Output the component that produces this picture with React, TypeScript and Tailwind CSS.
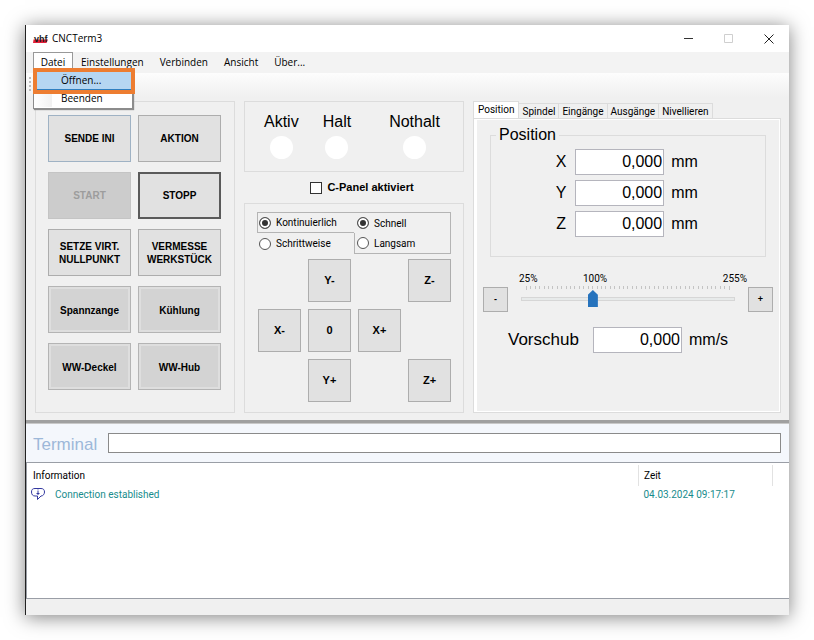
import React, { useState } from "react";
import clsx from "clsx";

const menus = ["Einstellungen", "Verbinden", "Ansicht", "Über..."];

const tabs = ["Position", "Spindel", "Eingänge", "Ausgänge", "Nivellieren"];

const commands = [
    { text: "SENDE INI", look: "focus" },
    { text: "AKTION", look: "normal" },
    { text: "START", look: "disabled" },
    { text: "STOPP", look: "strong" },
    { text: "SETZE VIRT. NULLPUNKT", look: "normal" },
    { text: "VERMESSE WERKSTÜCK", look: "normal" },
    { text: "Spannzange", look: "toggle" },
    { text: "Kühlung", look: "toggle" },
    { text: "WW-Deckel", look: "toggle" },
    { text: "WW-Hub", look: "toggle" },
];

const looks: Record<string, string> = {
    normal: "border border-[#adadad] bg-[#e1e1e1]",
    focus: "border border-[#9fb2c4] bg-[#e1e1e1]",
    disabled: "border border-[#c4c4c4] bg-[#cccccc] text-[#9d9d9d]",
    strong: "border-2 border-[#5a5a5a] bg-[#e1e1e1]",
    toggle: "border border-[#b4b4b4] bg-[#d3d3d3] pt-0.5 inset-ring-2 inset-ring-[#dedede]",
};

// null is an empty cell of the jog pad
const jogKeys = [
    null, "Y-", null, "Z-",
    "X-", "0", "X+", null,
    null, "Y+", null, "Z+",
];

const ticks = Array.from({ length: 47 }, (_, i) => i);

const VhfLogo = () => (
    <svg width="15" height="10" viewBox="0 0 15 10" aria-hidden="true">
        <path d="M.5 5.500h14.500L13.500 9H0z" fill="#e3203a" />
        <text
            x="1"
            y="8"
            fontSize="9"
            fontWeight="bold"
            fontFamily="'Liberation Sans', sans-serif"
            fill="#1a1a1a"
        >
            vhf
        </text>
    </svg>
);

const InfoBubble = () => (
    <svg width="14" height="12" viewBox="0 0 14 12" fill="none" stroke="#3338a0" aria-hidden="true">
        <path d="M4 .5h6c2.500 0 3.500 1.500 3.500 3.500S12.200 8 10 8L6.500 11.500V8H4C1.800 8 .5 6.500.5 4S1.700.5 4 .5z" />
        <path d="M7 1.500v1M7 3v4M5.500 5.500h3" />
    </svg>
);

const TitleBar = () => (
    <header className="flex h-[27px] items-center bg-white pl-[7px]">
        <VhfLogo />
        <h1 className="ml-1 flex-1 font-['Open_Sans',sans-serif] text-[10px]">CNCTerm3</h1>
        <button className="flex h-full w-[41px] items-center justify-center" aria-label="Minimieren">
            <svg width="10" height="10" stroke="#333"><path d="M0 4.500h9" /></svg>
        </button>
        <button className="flex h-full w-[39px] items-center justify-center" aria-label="Maximieren" disabled>
            <svg width="10" height="10" fill="none" stroke="#cfcfcf"><path d="M.5.5h8v8h-8z" /></svg>
        </button>
        <button className="flex h-full w-[41px] items-center justify-center" aria-label="Schließen">
            <svg width="10" height="10" stroke="#222"><path d="M.5.5l9 9M9.500.5l-9 9" /></svg>
        </button>
    </header>
);

const MenuBar = () => (
    <nav className="flex h-[21px] bg-[#f3f3f3] pl-[7px] font-['Open_Sans',sans-serif] text-[10px] leading-[18px]">
        <div className="relative">
            <button className="h-full w-10 border border-b-0 border-[#999] bg-white pb-[3px]">Datei</button>
            <div className="absolute top-4 left-0 z-10 h-[41px] w-[100px] border border-[#8c8c8c] bg-white shadow-[1px_1px_1px_#8c8c8c]">
                <div className="-mt-px -ml-px w-[102px] border-4 border-[#ed7d31]">
                    <button className="block h-[18px] w-full border-b border-[#2f7fc0] bg-[#b5d6f2] pb-0.5 pl-6 text-left leading-[14px]">
                        Öffnen...
                    </button>
                </div>
                <div className="flex">
                    <div className="h-[13px] w-[18px] bg-linear-to-r from-white to-[#f1f1f1]" />
                    <button className="ml-[9px] h-[13px] pb-1 leading-[9px]">Beenden</button>
                </div>
            </div>
        </div>
        {menus.map((menu) => (
            <button key={menu} className="px-2 pb-0.5">{menu}</button>
        ))}
    </nav>
);

const CommandPanel = () => (
    <section className="grid w-[200px] shrink-0 grid-cols-2 content-start gap-x-[7px] gap-y-[10px] border border-[#dcdcdc] pt-[13px] pr-[13px] pb-[22px] pl-3">
        {commands.map((command) => (
            <button
                key={command.text}
                disabled={command.look === "disabled"}
                className={clsx("h-[47px] px-1 text-[10px] leading-[13px] font-bold", looks[command.look])}
            >
                {command.text}
            </button>
        ))}
    </section>
);

const Lamp: React.FC<{ text: string; className?: string }> = ({ text, className }) => (
    <div className={clsx("flex flex-col items-center gap-1", className)}>
        <span className="text-[16px] leading-5">{text}</span>
        <span className="size-[23px] rounded-full bg-white" />
    </div>
);

const Radio: React.FC<{ name: string; text: string; checked?: boolean; className?: string }> = ({
    name,
    text,
    checked,
    className,
}) => (
    <label className={clsx("flex h-[21px] items-center gap-[5px] font-['Roboto',sans-serif]", className)}>
        <input
            type="radio"
            name={name}
            defaultChecked={checked}
            className="size-3 appearance-none rounded-full border border-[#555] bg-white checked:bg-[#333] checked:inset-ring-2 checked:inset-ring-white"
        />
        {text}
    </label>
);

const JogPanel = () => (
    <div className="flex w-[220px] shrink-0 flex-col">
        <section className="flex h-[71px] border border-[#dcdcdc] pt-[10px] pl-[19px]">
            <Lamp text="Aktiv" />
            <Lamp text="Halt" className="ml-6" />
            <Lamp text="Nothalt" className="ml-[38px]" />
        </section>
        <label className="flex h-[31px] items-center justify-center gap-[5px] pl-4 text-[11px] font-bold">
            <input type="checkbox" className="size-3 appearance-none border border-[#333] bg-white" />
            C-Panel aktiviert
        </label>
        <section className="flex-1 border border-[#dcdcdc] px-3 pt-2">
            <div className="grid grid-cols-2 text-[10px]">
                <Radio name="mode" text="Kontinuierlich" checked className="border border-r-0 border-[#b4b4b4] pl-px" />
                <Radio name="speed" text="Schnell" checked className="border border-b-0 border-l-0 border-[#b4b4b4] pl-[3px]" />
                <Radio name="mode" text="Schrittweise" className="pl-0.5" />
                <Radio name="speed" text="Langsam" className="border border-t-0 border-[#b4b4b4] pl-0.5" />
            </div>
            <div className="mt-[5px] grid grid-cols-[repeat(4,43px)] gap-[7px] pl-px text-[11px] font-bold">
                {jogKeys.map((key, i) =>
                    key ? (
                        <button key={i} className="h-[43px] border border-[#adadad] bg-[#e1e1e1]">{key}</button>
                    ) : (
                        <span key={i} />
                    )
                )}
            </div>
        </section>
    </div>
);

const PositionPage = () => (
    <div className="flex-1 border border-[#dcdcdc]">
        <div className="h-full border border-l-3 border-white pt-[5px]">
            <fieldset className="mx-[13px] border border-[#dcdcdc] pt-1 pr-[3px] pb-[19px]">
                <legend className="ml-[5px] px-[3px] text-[16px] leading-5">Position</legend>
                <div className="flex flex-col gap-[5px] text-[16px]">
                    {["X", "Y", "Z"].map((axis) => (
                        <label key={axis} className="flex items-center justify-center gap-2">
                            <span className="w-3 text-center">{axis}</span>
                            <input
                                defaultValue="0,000"
                                className="h-[26px] w-[89px] border border-[#b5b5bd] bg-white pr-px text-right"
                            />
                            <span className="-ml-px">mm</span>
                        </label>
                    ))}
                </div>
            </fieldset>
            <div className="mt-[15px] flex items-start px-1.5">
                <button className="mt-[15px] size-[25px] border border-[#adadad] bg-[#e1e1e1] text-[9px] font-bold">-</button>
                <div className="mx-[13px] flex-1">
                    <div className="-mr-3 -ml-0.5 flex font-['Roboto',sans-serif] text-[10px] leading-[14px]">
                        <span className="w-16">25%</span>
                        <span>100%</span>
                        <span className="ml-auto">255%</span>
                    </div>
                    <div className="flex h-1 justify-between px-[5px]">
                        {ticks.map((tick) => (
                            <span
                                key={tick}
                                className={clsx("w-px bg-[#c4c4c4]", tick === 0 || tick === 46 ? "h-1" : "h-[3px]")}
                            />
                        ))}
                    </div>
                    <input
                        type="range"
                        min={25}
                        max={255}
                        defaultValue={100}
                        aria-label="Vorschub in Prozent"
                        className="block h-[18px] w-full appearance-none bg-transparent [&::-webkit-slider-runnable-track]:h-1 [&::-webkit-slider-runnable-track]:border [&::-webkit-slider-runnable-track]:border-[#d6d6d6] [&::-webkit-slider-runnable-track]:bg-[#e7eaea] [&::-webkit-slider-thumb]:-mt-2 [&::-webkit-slider-thumb]:h-[17px] [&::-webkit-slider-thumb]:w-[10px] [&::-webkit-slider-thumb]:appearance-none [&::-webkit-slider-thumb]:bg-[#2673bd] [&::-webkit-slider-thumb]:[clip-path:polygon(50%_0,100%_28%,100%_100%,0_100%,0_28%)]"
                    />
                </div>
                <button className="mt-[15px] size-[25px] border border-[#adadad] bg-[#e1e1e1] text-[9px] font-bold">+</button>
            </div>
            <label className="mt-[15px] flex items-center pl-[31px]">
                <span className="w-[85px] text-[17px]">Vorschub</span>
                <input
                    defaultValue="0,000"
                    className="h-[26px] w-[89px] border border-[#b5b5bd] bg-white pr-px text-right text-[16px]"
                />
                <span className="ml-[7px] text-[16px]">mm/s</span>
            </label>
        </div>
    </div>
);

const TabPanel = () => {
    const [active, setActive] = useState("Position");

    return (
        <div className="flex flex-1 flex-col">
            <div className="flex h-[17px] items-end font-['Roboto',sans-serif] text-[10px]" role="tablist">
                {tabs.map((tab) => (
                    <button
                        key={tab}
                        role="tab"
                        aria-selected={tab === active}
                        onClick={() => setActive(tab)}
                        className={clsx(
                            "border border-b-0 border-[#dcdcdc]",
                            tab === active
                                ? "h-[17px] bg-white px-1 pb-px leading-[14px]"
                                : "h-[15px] border-l-0 px-[3px] leading-[15px]"
                        )}
                    >
                        {tab}
                    </button>
                ))}
            </div>
            <PositionPage />
        </div>
    );
};

const Log = () => (
    <div className="flex-1 border border-r-0 border-[#9a9ea6] bg-white pt-0.5 pr-4 font-['Roboto',sans-serif] text-[10px]">
        <table className="w-full table-fixed text-left">
            <thead>
                <tr className="h-[21px]">
                    <th className="border-r border-[#e2e2e2] pl-1.5 font-normal">Information</th>
                    <th className="w-[134px] border-r border-[#e2e2e2] pl-[5px] font-normal">Zeit</th>
                </tr>
            </thead>
            <tbody>
                <tr className="h-4 text-[#178c8c]">
                    <td className="pl-1">
                        <div className="flex items-center gap-[10px]">
                            <InfoBubble />
                            Connection established
                        </div>
                    </td>
                    <td className="pl-[5px]">04.03.2024 09:17:17</td>
                </tr>
            </tbody>
        </table>
    </div>
);

export default function App() {
    return (
        <div className="flex min-h-screen flex-col bg-white p-[25px] font-['Liberation_Sans',Arial,sans-serif] text-black">
            <main className="flex flex-1 flex-col border-l border-[#222] bg-[#f0f0f0] shadow-[0_2px_18px_rgba(0,0,0,0.5)]">
                <TitleBar />
                <MenuBar />
                <div className="flex h-6 flex-col gap-0.5 bg-linear-to-b from-[#fdfdfd] to-[#f0f0f0] pt-1 pl-[3px]">
                    {[0, 1, 2, 3].map((dot) => (
                        <span key={dot} className="size-0.5 bg-[#bcbcbc]" />
                    ))}
                </div>
                <div className="flex gap-[9px] pt-1 pr-2 pb-[7px] pl-[9px]">
                    <CommandPanel />
                    <JogPanel />
                    <TabPanel />
                </div>
                <div className="h-1 border-b border-[#c8c8c8] bg-[#a0a0a0]" />
                <label className="flex h-[38px] items-center bg-[#f4f7fc] pr-2 pl-[7px]">
                    <span className="w-[75px] pt-[3px] text-[17px] text-[#9db8d9]">Terminal</span>
                    <input className="h-5 min-w-0 flex-1 border border-[#8a8a8a] bg-white px-1 text-[11px]" />
                </label>
                <Log />
                <footer className="h-4" />
            </main>
        </div>
    );
}
